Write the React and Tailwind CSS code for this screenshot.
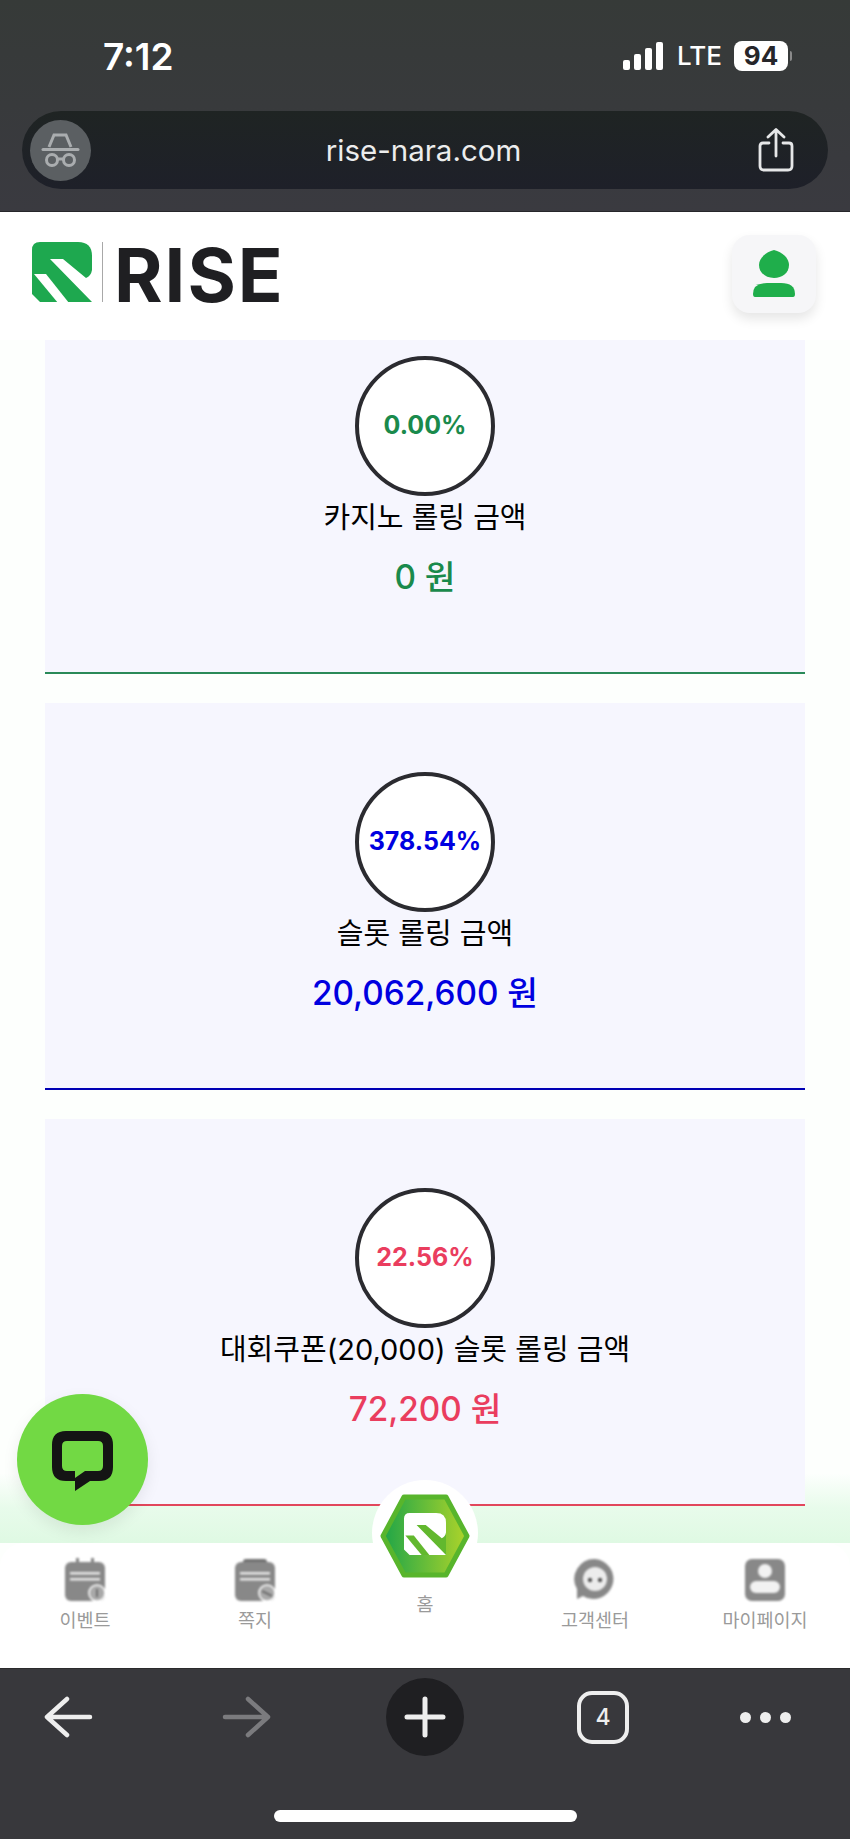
import React from "react";

function RMark({ base = "#1ea84f", cut = "#ffffff", size = 60 }) {
  return (
    <svg width={size} height={size} viewBox="0 0 60 60">
      <path d="M8 0H46Q60 0 60 14V60H8L0 52V8Q0 0 8 0Z" fill={base} />
      <path d="M18 17H31L54 36Q59 34 60 28V61H61L60 60Z" fill={cut} />
      <path d="M2 32H14L37 61H26Z" fill={cut} />
    </svg>
  );
}

function Card({ pct, label, value, text, border }) {
  return (
    <div className={`relative h-[387px] shrink-0 bg-[#f6f6fe] border-b-2 ${border} flex flex-col items-center pt-[69px]`}>
      <div className="w-[140px] h-[140px] rounded-full bg-white border-[4px] border-[#2b2b30] flex items-center justify-center">
        <span className={`text-[25px] font-bold ${text}`}>{pct}</span>
      </div>
      <div className="mt-[4px] h-[36px] leading-[36px] text-[29px] text-black">{label}</div>
      <div className={`mt-[21px] h-[40px] leading-[40px] text-[33.3px] font-medium ${text}`}>{value}</div>
    </div>
  );
}

function EventIcon() {
  return (
    <svg width="42" height="44" viewBox="0 0 42 44" className="blur-[1px]">
      <rect x="12" y="0" width="3" height="8" fill="#858585" />
      <rect x="27" y="0" width="3" height="8" fill="#858585" />
      <rect x="1" y="4" width="40" height="39" rx="6" fill="#888888" />
      <rect x="6" y="14" width="30" height="2.5" fill="#e8e8e8" />
      <rect x="6" y="20" width="30" height="2.5" fill="#e8e8e8" />
      <circle cx="33" cy="35" r="8" fill="#a9a9a9" stroke="#fff" strokeWidth="1.5" />
      <rect x="32" y="31" width="2" height="8" fill="#6f6f6f" />
    </svg>
  );
}
function NoteIcon() {
  return (
    <svg width="42" height="44" viewBox="0 0 42 44" className="blur-[1px]">
      <rect x="9" y="1" width="24" height="8" rx="3" fill="#707070" />
      <rect x="1" y="4" width="40" height="39" rx="6" fill="#888888" />
      <rect x="6" y="14" width="30" height="2.5" fill="#e8e8e8" />
      <rect x="6" y="20" width="30" height="2.5" fill="#e8e8e8" />
      <circle cx="33" cy="35" r="8" fill="#a9a9a9" stroke="#fff" strokeWidth="1.5" />
      <path d="M28 33L38 38" stroke="#6f6f6f" strokeWidth="2" />
    </svg>
  );
}
function HelpIcon() {
  return (
    <svg width="42" height="44" viewBox="0 0 42 44" className="blur-[1px]">
      <path d="M21 1A20 20 0 1 1 9 38L3 41L3 31A20 20 0 0 1 21 1Z" fill="#888888" />
      <circle cx="21" cy="21" r="12" fill="#ececec" />
      <circle cx="16" cy="22" r="2.2" fill="#555" />
      <circle cx="26" cy="22" r="2.2" fill="#555" />
    </svg>
  );
}
function MyIcon() {
  return (
    <svg width="42" height="44" viewBox="0 0 42 44" className="blur-[1px]">
      <rect x="1" y="1" width="40" height="42" rx="7" fill="#888888" />
      <circle cx="21" cy="13" r="7" fill="#f2f2f2" />
      <rect x="6" y="23" width="30" height="12" rx="6" fill="#f2f2f2" />
    </svg>
  );
}

function NavItem({ icon, label }) {
  return (
    <div className="flex flex-col items-center pt-[15px]">
      <div className="h-[44px] flex items-center justify-center">{icon}</div>
      <div className="mt-[5px] text-[18.5px] leading-[26px] text-[#9a9a9a]">{label}</div>
    </div>
  );
}

export default function App() {
  return (
    <div className="relative w-[850px] h-[1839px] overflow-hidden flex flex-col bg-[#fdfffd] font-[Inter,'Noto_Sans_CJK_KR',sans-serif]">
      {/* browser top chrome */}
      <div className="h-[212px] shrink-0 bg-gradient-to-b from-[#363a38] to-[#3a3a40] border-b border-[#26262a] flex flex-col">
        <div className="h-[111px] flex items-start justify-between pt-[36px] pl-[103px] pr-[58px]">
          <div className="text-[37px] leading-[42px] font-semibold text-white">7:12</div>
          <div className="flex items-center gap-[13px] mt-[5px]">
            <svg width="41" height="28" viewBox="0 0 41 28">
              <rect x="0" y="18" width="7" height="10" rx="2" fill="#fff" />
              <rect x="11" y="12" width="7" height="16" rx="2" fill="#fff" />
              <rect x="22" y="6" width="7" height="22" rx="2" fill="#fff" />
              <rect x="33" y="0" width="7" height="28" rx="2" fill="#fff" />
            </svg>
            <div className="text-[26px] leading-[30px] font-medium text-white w-[44px]">LTE</div>
            <div className="flex items-center gap-[2px]">
              <div className="w-[54px] h-[30px] rounded-[8px] bg-white flex items-center justify-center text-[26px] leading-[30px] font-bold text-[#26262a]">94</div>
              <div className="w-[2px] h-[10px] rounded-r bg-[#8a8a8a]" />
            </div>
          </div>
        </div>
        <div className="mx-[22px] h-[78px] rounded-[39px] bg-gradient-to-b from-[#1f2423] to-[#1e2029] flex items-center justify-between pl-[8px] pr-[33px] relative">
          <div className="w-[61px] h-[61px] rounded-full bg-[#5b5f62] flex items-center justify-center">
            <svg width="61" height="61" viewBox="0 0 61 61" fill="none" stroke="#aaadaf" strokeWidth="3">
              <path d="M19 27L24 15H36L41 27" />
              <path d="M13 29.5H48" strokeLinecap="round" />
              <circle cx="22" cy="40" r="5.5" />
              <circle cx="39" cy="40" r="5.5" />
              <path d="M27.5 39H33.5" />
            </svg>
          </div>
          <div className="absolute left-0 right-[3px] text-center text-[29.5px] leading-[36px] text-[#eceded]">rise-nara.com</div>
          <svg width="38" height="44" viewBox="0 0 38 44" fill="none" stroke="#e6e7e8" strokeWidth="2.8" strokeLinecap="round" strokeLinejoin="round">
            <path d="M12 15H6Q3 15 3 18V38Q3 42 7 42H31Q35 42 35 38V18Q35 15 32 15H26" />
            <path d="M19 28V2M11 9L19 1.5L27 9" />
          </svg>
        </div>
      </div>

      {/* site header */}
      <div className="relative z-10 h-[128px] shrink-0 bg-white flex items-start justify-between pl-[32px] pr-[34px] pt-[23px]">
        <div className="flex items-start mt-[7px]">
          <RMark />
          <div className="ml-[10px] w-[1px] h-[60px] bg-[#a8a8a8]" />
          <div className="ml-[11px] text-[74px] leading-[66px] font-bold text-[#1f1f22] tracking-[2px]">RISE</div>
        </div>
        <div className="w-[84px] h-[78px] rounded-[18px] bg-[#f6f6f8] shadow-[0_6px_12px_rgba(0,0,0,0.10)] flex items-center justify-center">
          <svg width="44" height="48" viewBox="0 0 44 48">
            <path d="M22 0C30 2 37 8 37 15C37 23 30 28 22 28C14 28 7 23 7 15C7 8 14 2 22 0Z" fill="#1fae4b" />
            <path d="M1 44Q1 33 15 33H29Q43 33 43 44Q43 47 41 47H3Q1 47 1 44Z" fill="#1fae4b" />
          </svg>
        </div>
      </div>

      {/* page */}
      <div className="relative flex-1 overflow-hidden px-[45px]">
        {/* glow behind bottom nav */}
        <div className="absolute inset-x-0 bottom-[125px] h-[70px] bg-gradient-to-t from-[#dff9e3] via-[#e8fbeb] to-[#e8fbeb00]" />

        <div className="-mt-[53px] flex flex-col gap-[29px]">
          <Card pct="0.00%" label="카지노 롤링 금액" value="0 원" text="text-[#1a8a4c]" border="border-[#2a8a58]" />
          <Card pct="378.54%" label="슬롯 롤링 금액" value="20,062,600 원" text="text-[#0000e0]" border="border-[#0000b4]" />
          <Card pct="22.56%" label="대회쿠폰(20,000) 슬롯 롤링 금액" value="72,200 원" text="text-[#ea3d5e]" border="border-[#e2465c]" />
        </div>

        {/* chat button */}
        <div className="absolute left-[17px] bottom-[143px] w-[131px] h-[131px] rounded-full bg-[#72d944] shadow-[0_6px_16px_rgba(0,0,0,0.08)] flex items-center justify-center">
          <svg width="61" height="60" viewBox="0 0 61 60" fillRule="evenodd" className="mt-[2px]">
            <path
              fill="#141414"
              d="M14 0H47Q61 0 61 14V36Q61 50 47 50H38L23 60V50H14Q0 50 0 36V14Q0 0 14 0ZM15 10Q10 10 10 15V35Q10 40 15 40H23V47L33 40H46Q51 40 51 35V15Q51 10 46 10Z"
            />
          </svg>
        </div>

        {/* bottom nav */}
        <div className="absolute inset-x-0 bottom-0 h-[125px] bg-white rounded-t-[24px] grid grid-cols-5">
          <NavItem icon={<EventIcon />} label="이벤트" />
          <NavItem icon={<NoteIcon />} label="쪽지" />
          <div className="flex flex-col items-center pt-[47px]">
            <div className="mt-[1px] text-[18.5px] leading-[26px] text-[#9a9a9a]">홈</div>
          </div>
          <NavItem icon={<HelpIcon />} label="고객센터" />
          <NavItem icon={<MyIcon />} label="마이페이지" />
        </div>

        {/* home badge */}
        <div className="absolute left-[372px] bottom-[82px] w-[106px] h-[106px] rounded-full bg-white flex items-center justify-center">
          <div className="relative w-[90px] h-[84px] mt-[6px]">
            <svg width="90" height="84" viewBox="0 0 90 84">
              <defs>
                <linearGradient id="hexf" x1="0" x2="1" y1="0" y2="0">
                  <stop offset="0" stopColor="#1fa548" />
                  <stop offset="1" stopColor="#aed42a" />
                </linearGradient>
              </defs>
              <path d="M24 3H66L87 42L66 81H24L3 42Z" fill="url(#hexf)" stroke="#58b52c" strokeWidth="5" strokeLinejoin="round" />
            </svg>
            <div className="absolute left-[24px] top-[19px]">
              <RMark base="#ffffff" cut="#62b82e" size={42} />
            </div>
          </div>
        </div>
      </div>

      {/* browser bottom chrome */}
      <div className="h-[171px] shrink-0 bg-[#38383c] border-t border-[#2a2a2c] flex flex-col">
        <div className="h-[88px] mt-[4px] grid grid-cols-5 items-center">
          <div className="flex justify-center -ml-[34px]">
            <svg width="50" height="42" viewBox="0 0 50 42" fill="none" stroke="#eeeeee" strokeWidth="4.5" strokeLinecap="round" strokeLinejoin="round">
              <path d="M24 3L4 21L24 39M4 21H47" />
            </svg>
          </div>
          <div className="flex justify-center -ml-[16px]">
            <svg width="50" height="42" viewBox="0 0 50 42" fill="none" stroke="#7b7b7e" strokeWidth="4.5" strokeLinecap="round" strokeLinejoin="round">
              <path d="M26 3L46 21L26 39M46 21H3" />
            </svg>
          </div>
          <div className="flex justify-center">
            <div className="w-[78px] h-[78px] rounded-full bg-[#1f1f22] flex items-center justify-center">
              <svg width="42" height="42" viewBox="0 0 42 42" stroke="#eeeeee" strokeWidth="5" strokeLinecap="round">
                <path d="M21 3V39M3 21H39" />
              </svg>
            </div>
          </div>
          <div className="flex justify-center ml-[16px]">
            <div className="w-[52px] h-[53px] rounded-[15px] border-[4px] border-[#eeeeee] flex items-center justify-center text-[23px] font-medium text-[#eeeeee]">4</div>
          </div>
          <div className="flex justify-center gap-[9px] ml-[1px]">
            <div className="w-[11px] h-[11px] rounded-full bg-[#eeeeee]" />
            <div className="w-[11px] h-[11px] rounded-full bg-[#eeeeee]" />
            <div className="w-[11px] h-[11px] rounded-full bg-[#eeeeee]" />
          </div>
        </div>
        <div className="mt-[49px] mx-auto w-[303px] h-[12px] rounded-[6px] bg-white" />
      </div>
    </div>
  );
}
